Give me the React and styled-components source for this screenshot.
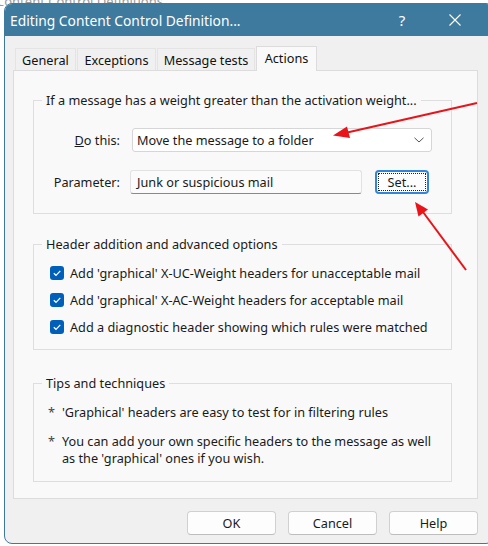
import React from "react";
import styled, { createGlobalStyle } from "styled-components";

const GlobalStyle = createGlobalStyle`
  html, body {
    margin: 0;
    padding: 0;
    background: #ffffff;
  }
  body {
    font-family: "Noto Sans", "Open Sans", "Liberation Sans", sans-serif;
    font-size: 12.7px;
    color: #1a1a1a;
  }
`;

const Desktop = styled.div`
  position: relative;
  width: 488px;
  height: 546px;
  overflow: hidden;
  background: #ffffff;
`;

const BehindTitle = styled.div`
  position: absolute;
  left: -4px;
  top: -8px;
  font-size: 13px;
  color: #9a9a9a;
  white-space: nowrap;
`;

const Window = styled.div`
  position: absolute;
  left: 4px;
  top: 3px;
  width: 490px;
  height: 541px;
  display: flex;
  flex-direction: column;
  background: #f0f0f0;
  border: 1px solid #3e7a9e;
  border-radius: 8px;
  overflow: hidden;
  box-sizing: border-box;
`;

const TitleBar = styled.div`
  height: 32px;
  flex: none;
  display: flex;
  align-items: center;
  background: #3e7a9e;
  color: #ffffff;
  padding-left: 5px;
`;

const TitleText = styled.div`
  flex: 1;
  font-size: 13.8px;
`;

const TitleButton = styled.div`
  width: ${(p) => p.w}px;
  display: flex;
  justify-content: center;
  align-items: center;
  font-size: 15px;
  color: #ffffff;
`;

const Body = styled.div`
  flex: 1;
  display: flex;
  flex-direction: column;
  padding: 9px 10px 0 8px;
  width: 465px;
  box-sizing: content-box;
`;

const TabStrip = styled.div`
  display: flex;
  align-items: flex-end;
  height: 25px;
  padding-left: 2px;
`;

const Tab = styled.div`
  height: ${(p) => (p.active ? 25 : 22)}px;
  width: ${(p) => p.w}px;
  box-sizing: border-box;
  display: flex;
  align-items: center;
  justify-content: center;
  background: ${(p) => (p.active ? "#f9f9f9" : "#f0f0f0")};
  border: 1px solid ${(p) => (p.active ? "#dcdcdc" : "#e4e4e4")};
  border-bottom: none;
  margin-right: 1px;
  position: relative;
  z-index: ${(p) => (p.active ? 1 : 0)};
  margin-bottom: ${(p) => (p.active ? -1 : 0)}px;
  padding-bottom: ${(p) => (p.active ? 3 : 0)}px;
  color: #111;
`;

const Panel = styled.div`
  height: 429px;
  background: #f9f9f9;
  border: 1px solid #dcdcdc;
  box-sizing: border-box;
  padding: 21px 25px 0 19px;
  display: flex;
  flex-direction: column;
`;

const Group = styled.fieldset`
  margin: ${(p) => p.top || 0}px 0 0 0;
  padding: 0;
  border: 1px solid #dedede;
  min-width: 0;
`;

const Legend = styled.legend`
  margin-left: 8px;
  padding: 0 4px;
  line-height: 17px;
  color: #1a1a1a;
`;

const ActionGrid = styled.div`
  display: grid;
  grid-template-columns: 86px 1fr;
  column-gap: 12px;
  row-gap: 18px;
  align-items: center;
  padding: 19px 19px 19px 0;
`;

const Label = styled.div`
  text-align: right;
`;

const Combo = styled.div`
  height: 24px;
  box-sizing: border-box;
  background: #ffffff;
  border: 1px solid #d6d6d6;
  border-radius: 3px;
  display: flex;
  align-items: center;
  padding-left: 4px;
  padding-right: 6px;
`;

const ComboText = styled.div`
  flex: 1;
`;

const ParamRow = styled.div`
  display: flex;
  align-items: center;
  gap: 13px;
  margin-left: -2px;
`;

const TextBox = styled.div`
  width: 232px;
  height: 24px;
  box-sizing: border-box;
  background: #fbfbfb;
  border: 1px solid #e2e2e2;
  border-bottom: 1px solid #8a8a8a;
  border-radius: 3px;
  display: flex;
  align-items: center;
  padding-left: 6px;
`;

const SetButton = styled.div`
  width: 54px;
  height: 24px;
  box-sizing: border-box;
  border: 2px solid #3185db;
  border-radius: 4px;
  background: #fdfdfd;
  padding: 1px;
  display: flex;
`;

const FocusRect = styled.div`
  flex: 1;
  border: 1px dotted #222;
  display: flex;
  align-items: center;
  justify-content: center;
`;

const CheckList = styled.div`
  display: flex;
  flex-direction: column;
  gap: 11px;
  padding: 12px 0 14px 16px;
`;

const CheckRow = styled.label`
  display: flex;
  align-items: center;
  gap: 6px;
  height: 16px;
`;

const Box = styled.span`
  width: 14px;
  height: 14px;
  flex: none;
  border-radius: 3px;
  background: #005fb8;
  display: flex;
  align-items: center;
  justify-content: center;
`;

const TipList = styled.div`
  display: flex;
  flex-direction: column;
  gap: 12px;
  padding: 12px 12px 14px 14px;
`;

const Tip = styled.div`
  display: flex;
  line-height: 17px;
`;

const Star = styled.span`
  width: 14px;
  flex: none;
  color: #444;
`;

const Footer = styled.div`
  display: flex;
  justify-content: flex-end;
  gap: 12px;
  padding-top: 12px;
`;

const Button = styled.div`
  width: 89px;
  height: 24px;
  box-sizing: border-box;
  background: #fdfdfd;
  border: 1px solid #d0d0d0;
  border-bottom-color: #bdbdbd;
  border-radius: 4px;
  display: flex;
  align-items: center;
  justify-content: center;
`;

const Arrows = styled.svg`
  position: absolute;
  left: 0;
  top: 0;
  pointer-events: none;
`;

const Tick = () => (
  <svg width="10" height="10" viewBox="0 0 10 10">
    <path d="M1.8 5.2 L4 7.3 L8.3 2.8" fill="none" stroke="#ffffff" strokeWidth="1.2" />
  </svg>
);

const Chevron = () => (
  <svg width="12" height="8" viewBox="0 0 12 8">
    <path d="M1.5 1.8 L6 6 L10.5 1.8" fill="none" stroke="#555" strokeWidth="1" />
  </svg>
);

const CloseGlyph = () => (
  <svg width="12" height="12" viewBox="0 0 12 12">
    <path d="M0.5 0.5 L11.5 11.5 M11.5 0.5 L0.5 11.5" stroke="#fff" strokeWidth="1.1" />
  </svg>
);

const checks = [
  "Add 'graphical' X-UC-Weight headers for unacceptable mail",
  "Add 'graphical' X-AC-Weight headers for acceptable mail",
  "Add a diagnostic header showing which rules were matched",
];

const tips = [
  "'Graphical' headers are easy to test for in filtering rules",
  "You can add your own specific headers to the message as well as the 'graphical' ones if you wish.",
];

const tabs = [
  { name: "General", w: 61 },
  { name: "Exceptions", w: 79 },
  { name: "Message tests", w: 98 },
  { name: "Actions", w: 61, active: true },
];

const App = () => {
  return (
    <>
      <GlobalStyle />
      <Desktop>
        <BehindTitle>Content Control Definitions</BehindTitle>
        <Window>
          <TitleBar>
            <TitleText>Editing Content Control Definition...</TitleText>
            <TitleButton w={46}>?</TitleButton>
            <TitleButton w={60}>
              <CloseGlyph />
            </TitleButton>
            <TitleButton w={8} />
          </TitleBar>
          <Body>
            <TabStrip>
              {tabs.map((t) => (
                <Tab key={t.name} w={t.w} active={t.active}>
                  {t.name}
                </Tab>
              ))}
            </TabStrip>
            <Panel>
              <Group>
                <Legend>If a message has a weight greater than the activation weight...</Legend>
                <ActionGrid>
                  <Label>
                    <u>D</u>o this:
                  </Label>
                  <Combo>
                    <ComboText>Move the message to a folder</ComboText>
                    <Chevron />
                  </Combo>
                  <Label>Parameter:</Label>
                  <ParamRow>
                    <TextBox>Junk or suspicious mail</TextBox>
                    <SetButton>
                      <FocusRect>Set...</FocusRect>
                    </SetButton>
                  </ParamRow>
                </ActionGrid>
              </Group>
              <Group top={22}>
                <Legend>Header addition and advanced options</Legend>
                <CheckList>
                  {checks.map((c) => (
                    <CheckRow key={c}>
                      <Box>
                        <Tick />
                      </Box>
                      {c}
                    </CheckRow>
                  ))}
                </CheckList>
              </Group>
              <Group top={25}>
                <Legend>Tips and techniques</Legend>
                <TipList>
                  {tips.map((t) => (
                    <Tip key={t}>
                      <Star>*</Star>
                      <span>{t}</span>
                    </Tip>
                  ))}
                </TipList>
              </Group>
            </Panel>
            <Footer>
              <Button>OK</Button>
              <Button>Cancel</Button>
              <Button>Help</Button>
            </Footer>
          </Body>
        </Window>
        <Arrows width="488" height="546" viewBox="0 0 488 546">
          <g stroke="#e8141a" strokeWidth="2" fill="#e8141a">
            <line x1="477" y1="103" x2="345" y2="133" />
            <path d="M333 135.5 L347 126.5 L350 138 Z" stroke="none" />
            <line x1="466" y1="270" x2="423" y2="212" />
            <path d="M415 202 L428 209.5 L418.5 216.5 Z" stroke="none" />
          </g>
        </Arrows>
      </Desktop>
    </>
  );
};

export default App;
